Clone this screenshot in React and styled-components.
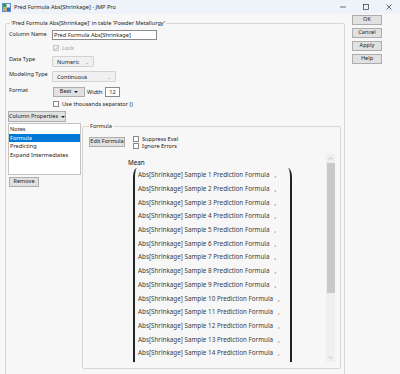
import React from "react";
import styled, { createGlobalStyle } from "styled-components";

const GlobalStyle = createGlobalStyle`
  html, body {
    margin: 0;
    padding: 0;
    overflow: hidden;
  }
  body {
    background: #f7f7f7;
    font-family: "Noto Sans", "Open Sans", sans-serif;
    font-size: 5.6px;
    color: #1e1e1e;
  }
`;

const Window = styled.div`
  width: 400px;
  height: 374px;
  display: flex;
  flex-direction: column;
  overflow: hidden;
`;

const TitleBar = styled.div`
  height: 14px;
  flex: none;
  display: flex;
  align-items: center;
  background: #eef3f9;
  padding-left: 2px;
`;

const TitleText = styled.span`
  margin-left: 3px;
  font-size: 5.6px;
  color: #222;
`;

const WinControls = styled.div`
  margin-left: auto;
  display: flex;
  align-items: center;
`;

const WinControl = styled.div`
  width: 23px;
  height: 14px;
  display: flex;
  align-items: center;
  justify-content: center;
`;

const Body = styled.div`
  flex: 1;
  display: flex;
  align-items: flex-start;
  padding: 1px 0 0 5px;
`;

const OuterGroup = styled.fieldset`
  margin: 4px 0 0 0;
  width: 340px;
  height: 400px;
  box-sizing: border-box;
  border: 1px solid #d6d6d6;
  border-radius: 2px;
  padding: 0 0 0 3px;
  min-width: 0;
`;

const Legend = styled.legend`
  padding: 0 1px;
  margin-left: 1px;
  font-size: 5.6px;
  line-height: 8px;
  color: #222;
`;

const SideButtons = styled.div`
  margin-left: 7px;
  display: flex;
  flex-direction: column;
  gap: 3px;
`;

const Button = styled.button`
  font-family: inherit;
  font-size: 5.6px;
  color: #222;
  background: #e1e1e1;
  border: 1px solid #adadad;
  border-radius: 0;
  padding: 0 1px;
  height: ${(p) => p.$h || 10}px;
  width: ${(p) => (p.$w ? p.$w + "px" : "auto")};
  display: flex;
  align-items: center;
  justify-content: center;
  gap: 3px;
  line-height: 1;
  white-space: nowrap;
  box-sizing: border-box;
`;

const Row = styled.div`
  display: flex;
  align-items: flex-start;
  margin-top: ${(p) => p.$mt || 0}px;
`;

const Label = styled.div`
  width: 43px;
  flex: none;
  line-height: 8px;
  margin-top: ${(p) => p.$mt || 0}px;
`;

const WidthLabel = styled.span`
  margin: 1px 2px 0 2px;
  line-height: 8px;
`;

const TextInput = styled.div`
  width: ${(p) => p.$w}px;
  height: 10px;
  box-sizing: border-box;
  background: #fff;
  border: 1px solid #8a8a8a;
  padding-left: 1px;
  line-height: 8px;
  display: flex;
  align-items: center;
  justify-content: ${(p) => (p.$center ? "center" : "flex-start")};
`;

const Select = styled.div`
  width: ${(p) => p.$w}px;
  height: 11px;
  box-sizing: border-box;
  background: #f0f0f0;
  border: 1px solid #d2d2d2;
  border-radius: 1px;
  display: flex;
  align-items: center;
  padding: 0 4px;
  justify-content: space-between;
`;

const Chevron = styled.span`
  color: #888;
  font-size: 5px;
`;

const CheckRow = styled.div`
  display: flex;
  align-items: center;
  gap: 3px;
  margin-left: ${(p) => p.$ml || 0}px;
  color: ${(p) => (p.$disabled ? "#9a9a9a" : "#222")};
  height: ${(p) => p.$h || 7}px;
`;

const Box = styled.span`
  width: 6px;
  height: 6px;
  box-sizing: border-box;
  background: ${(p) => (p.$disabled ? "#f2f2f2" : "#fff")};
  border: 1px solid ${(p) => (p.$disabled ? "#c4c4c4" : "#8a8a8a")};
  display: flex;
  align-items: center;
  justify-content: center;
`;

const Caret = styled.span`
  width: 0;
  height: 0;
  border-left: 2px solid transparent;
  border-right: 2px solid transparent;
  border-top: 2.5px solid #222;
`;

const Lower = styled.div`
  display: flex;
  align-items: flex-start;
  gap: 1px;
  margin-left: -1px;
`;

const LeftCol = styled.div`
  display: flex;
  flex-direction: column;
  gap: 2px;
  margin-top: 1px;
`;

const ListBox = styled.div`
  width: 73px;
  height: 52px;
  box-sizing: border-box;
  background: #fff;
  border: 1px solid #c4c4c4;
  padding-top: 1px;
`;

const ListItem = styled.div`
  height: 8.5px;
  line-height: 8.5px;
  padding-left: 1px;
  background: ${(p) => (p.$selected ? "#0078d7" : "transparent")};
  color: ${(p) => (p.$selected ? "#fff" : "#222")};
`;

const FormulaGroup = styled.fieldset`
  margin: 0;
  width: 259px;
  height: 247px;
  box-sizing: border-box;
  border: 1px solid #d6d6d6;
  border-radius: 2px;
  padding: 0 0 0 5px;
  min-width: 0;
  display: flex;
  flex-direction: column;
`;

const FormulaTop = styled.div`
  display: flex;
  align-items: flex-start;
  gap: 8px;
  margin: 7px 0 0 1px;
`;

const Checks = styled.div`
  display: flex;
  flex-direction: column;
  margin-top: -2px;
`;

const ScrollArea = styled.div`
  margin-top: 5px;
  height: 208px;
  flex: none;
  display: flex;
  overflow: hidden;
  margin-right: 5px;
`;

const ScrollContent = styled.div`
  flex: 1;
  padding-left: 40px;
  overflow: hidden;
`;

const Mean = styled.div`
  font-size: 6.3px;
  line-height: 8px;
  margin-top: 5px;
  color: #111;
`;

const Formula = styled.div`
  display: flex;
  margin-top: 1px;
  margin-left: 5px;
`;

const Paren = styled.div`
  width: 4px;
  flex: none;
  box-sizing: border-box;
  ${(p) =>
    p.$right
      ? `border-right: 2px solid #222; border-radius: 0 5px 5px 0 / 0 12px 12px 0;`
      : `border-left: 2px solid #222; border-radius: 5px 0 0 5px / 12px 0 0 12px;`}
`;

const Items = styled.div`
  width: 150px;
  padding: 0 0 14px 1px;
  display: flex;
  flex-direction: column;
`;

const Item = styled.div`
  height: 13.7px;
  display: flex;
  align-items: center;
  font-size: 6.3px;
  color: #3c3c3c;
  white-space: nowrap;
`;

const Comma = styled.span`
  margin-left: 5px;
  color: #555;
`;

const Scrollbar = styled.div`
  width: 9px;
  flex: none;
  background: #f0f0f0;
  display: flex;
  flex-direction: column;
  align-items: center;
`;

const ScrollArrow = styled.div`
  height: 9px;
  flex: none;
  display: flex;
  align-items: center;
  justify-content: center;
`;

const Thumb = styled.div`
  width: 8px;
  height: 130px;
  flex: none;
  background: #c9c9c9;
`;

const Spacer = styled.div`
  flex: 1;
`;

function JmpIcon() {
  return (
    <svg width="9" height="9" viewBox="0 0 9 9">
      <rect x="0.5" y="0.5" width="8" height="8" fill="#e8f0f8" stroke="#5a8fc8" />
      <rect x="1" y="1" width="3.5" height="3.5" fill="#3a9a4a" />
      <rect x="4.5" y="4.5" width="3.5" height="3.5" fill="#2f6fc0" />
      <rect x="1" y="4.5" width="3.5" height="3.5" fill="#d9a53a" />
    </svg>
  );
}

function Check() {
  return (
    <svg width="5" height="5" viewBox="0 0 5 5">
      <path d="M0.7 2.6 L2 3.8 L4.3 1" fill="none" stroke="#9a9a9a" strokeWidth="0.9" />
    </svg>
  );
}

function Arrow({ up }) {
  return (
    <svg width="5" height="3" viewBox="0 0 5 3">
      <path
        d={up ? "M0.5 2.5 L2.5 0.7 L4.5 2.5" : "M0.5 0.5 L2.5 2.3 L4.5 0.5"}
        fill="none"
        stroke="#a8a8a8"
        strokeWidth="0.7"
      />
    </svg>
  );
}

export default function App() {
  const items = Array.from({ length: 14 }, (_, i) => i + 1);
  return (
    <Window>
      <GlobalStyle />
      <TitleBar>
        <JmpIcon />
        <TitleText>Pred Formula Abs[Shrinkage] - JMP Pro</TitleText>
        <WinControls>
          <WinControl>
            <svg width="6" height="6" viewBox="0 0 6 6">
              <path d="M0 3 H6" stroke="#333" strokeWidth="0.7" />
            </svg>
          </WinControl>
          <WinControl>
            <svg width="6" height="6" viewBox="0 0 6 6">
              <rect x="0.5" y="0.5" width="5" height="5" fill="none" stroke="#333" strokeWidth="0.7" />
            </svg>
          </WinControl>
          <WinControl>
            <svg width="6" height="6" viewBox="0 0 6 6">
              <path d="M0.5 0.5 L5.5 5.5 M5.5 0.5 L0.5 5.5" stroke="#333" strokeWidth="0.7" />
            </svg>
          </WinControl>
        </WinControls>
      </TitleBar>
      <Body>
        <OuterGroup>
          <Legend>'Pred Formula Abs[Shrinkage]' in table 'Powder Metallurgy'</Legend>
          <Row $mt={3}>
            <Label>Column Name</Label>
            <TextInput $w={105}>Pred Formula Abs[Shrinkage]</TextInput>
          </Row>
          <Row $mt={4}>
            <Label />
            <CheckRow $ml={1} $disabled $h={8}>
              <Box $disabled>
                <Check />
              </Box>
              Lock
            </CheckRow>
          </Row>
          <Row $mt={4}>
            <Label $mt={-1}>Data Type</Label>
            <Select $w={42}>
              Numeric <Chevron>⌄</Chevron>
            </Select>
          </Row>
          <Row $mt={4}>
            <Label $mt={-1}>Modeling Type</Label>
            <Select $w={64}>
              Continuous <Chevron>⌄</Chevron>
            </Select>
          </Row>
          <Row $mt={5}>
            <Label $mt={-1}>Format</Label>
            <Button $w={32} $h={10} style={{ marginLeft: 1 }}>
              Best <Caret />
            </Button>
            <WidthLabel>Width</WidthLabel>
            <TextInput $w={15} $center>
              12
            </TextInput>
          </Row>
          <Row $mt={3}>
            <Label />
            <CheckRow $ml={1}>
              <Box />
              Use thousands separator ()
            </CheckRow>
          </Row>
          <Row $mt={4} style={{ marginLeft: -1 }}>
            <Button $w={58} $h={11}>
              Column Properties <Caret />
            </Button>
          </Row>
          <Lower>
            <LeftCol>
              <ListBox>
                <ListItem>Notes</ListItem>
                <ListItem $selected>Formula</ListItem>
                <ListItem>Predicting</ListItem>
                <ListItem>Expand Intermediates</ListItem>
              </ListBox>
              <Button $w={30} $h={10} style={{ marginLeft: 1 }}>
                Remove
              </Button>
            </LeftCol>
            <FormulaGroup>
              <Legend>Formula</Legend>
              <FormulaTop>
                <Button $w={36} $h={10}>
                  Edit Formula
                </Button>
                <Checks>
                  <CheckRow>
                    <Box />
                    Suppress Eval
                  </CheckRow>
                  <CheckRow>
                    <Box />
                    Ignore Errors
                  </CheckRow>
                </Checks>
              </FormulaTop>
              <ScrollArea>
                <ScrollContent>
                  <Mean>Mean</Mean>
                  <Formula>
                    <Paren />
                    <Items>
                      {items.map((n) => (
                        <Item key={n}>
                          Abs[Shrinkage] Sample {n} Prediction Formula
                          <Comma>,</Comma>
                        </Item>
                      ))}
                    </Items>
                    <Paren $right />
                  </Formula>
                </ScrollContent>
                <Scrollbar>
                  <ScrollArrow>
                    <Arrow up />
                  </ScrollArrow>
                  <Thumb />
                  <Spacer />
                  <ScrollArrow>
                    <Arrow />
                  </ScrollArrow>
                </Scrollbar>
              </ScrollArea>
            </FormulaGroup>
          </Lower>
        </OuterGroup>
        <SideButtons>
          <Button $w={30}>OK</Button>
          <Button $w={30}>Cancel</Button>
          <Button $w={30}>Apply</Button>
          <Button $w={30}>Help</Button>
        </SideButtons>
      </Body>
    </Window>
  );
}
